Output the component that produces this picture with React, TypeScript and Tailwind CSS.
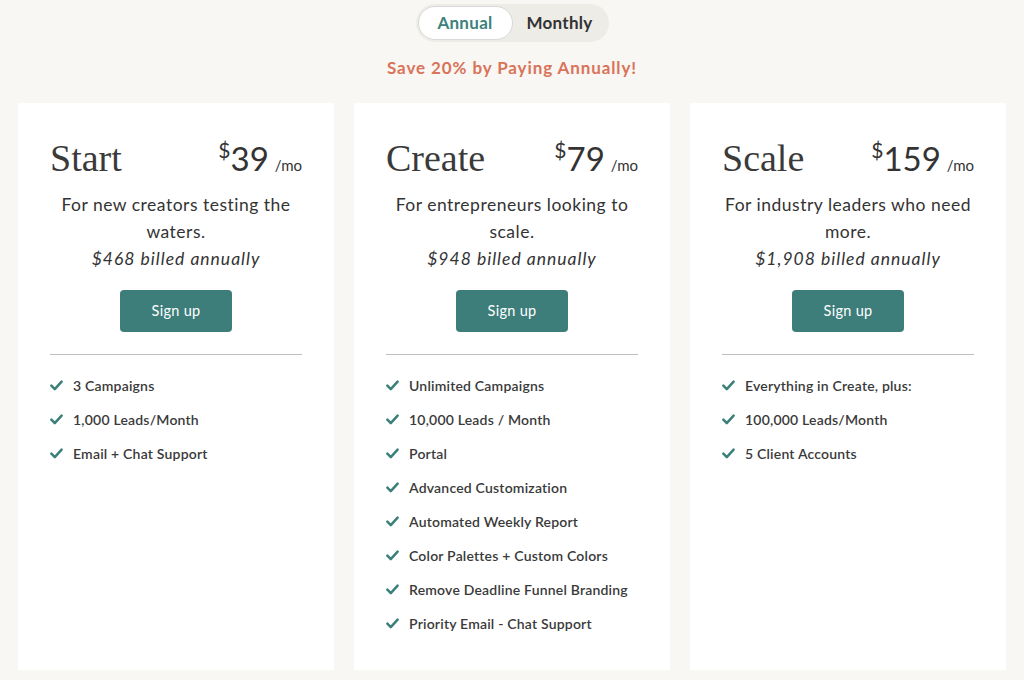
import React from "react";

const sans = { fontFamily: '"Lato", "Noto Sans", sans-serif' };

type Plan = {
  name: string;
  price: string;
  desc: string;
  billed: string;
  features: string[];
};

const plans: Plan[] = [
  {
    name: "Start",
    price: "39",
    desc: "For new creators testing the waters.",
    billed: "$468 billed annually",
    features: ["3 Campaigns", "1,000 Leads/Month", "Email + Chat Support"],
  },
  {
    name: "Create",
    price: "79",
    desc: "For entrepreneurs looking to scale.",
    billed: "$948 billed annually",
    features: [
      "Unlimited Campaigns",
      "10,000 Leads / Month",
      "Portal",
      "Advanced Customization",
      "Automated Weekly Report",
      "Color Palettes + Custom Colors",
      "Remove Deadline Funnel Branding",
      "Priority Email - Chat Support",
    ],
  },
  {
    name: "Scale",
    price: "159",
    desc: "For industry leaders who need more.",
    billed: "$1,908 billed annually",
    features: ["Everything in Create, plus:", "100,000 Leads/Month", "5 Client Accounts"],
  },
];

function Check() {
  return (
    <svg width="13" height="11" viewBox="0 0 13 11" fill="none" className="shrink-0">
      <path d="M1.4 5.7 L4.8 9.1 L11.6 1.6" stroke="#3b7f79" strokeWidth="2.5" strokeLinecap="round" strokeLinejoin="round" />
    </svg>
  );
}

function Card({ p }: { p: Plan }) {
  return (
    <div className="bg-white px-8 pt-[33px] pb-9 flex flex-col">
      <div className="flex items-baseline justify-between">
        <div className="text-[38px] leading-[44px] text-[#3a3a3a]" style={{ fontFamily: '"Liberation Serif", serif' }}>
          {p.name}
        </div>
        <div className="flex items-baseline text-[#333]" style={sans}>
          <span className="text-[21px] relative -top-[13px]">$</span>
          <span className="text-[33px] leading-[40px]">{p.price}</span>
          <span className="text-[15px] ml-[6px]">/mo</span>
        </div>
      </div>
      <div className="mt-[11px] -mx-3 text-center text-[17.5px] leading-[27px] text-[#333] tracking-[0.5px]" style={sans}>
        <div className="px-2">{p.desc}</div>
        <div className="italic tracking-[1px]">{p.billed}</div>
      </div>
      <div className="flex justify-center mt-[18px]">
        <button className="w-[112px] h-[42px] bg-[#3d7e7a] rounded-[4px] text-white text-[14.5px] tracking-[0.3px]" style={sans}>
          Sign up
        </button>
      </div>
      <div className="mt-[22px] h-px bg-[#bdbdbd]" />
      <ul className="mt-[20px] flex flex-col gap-[14px]" style={sans}>
        {p.features.map((f) => (
          <li key={f} className="flex items-center gap-[10px] h-5 text-[14px] font-semibold text-[#3a3a3a] tracking-[0.2px]">
            <Check />
            <span>{f}</span>
          </li>
        ))}
      </ul>
    </div>
  );
}

export default function App() {
  return (
    <div className="w-[1024px] h-[680px] bg-[#f8f7f3] overflow-hidden" style={sans}>
      <div className="flex justify-center pt-1">
        <div className="flex items-center h-[38px] w-[193px] rounded-full bg-[#eeece7] p-[2px]">
          <div className="h-[34px] w-[95px] rounded-full bg-white border border-[#d9d9d9] flex items-center justify-center text-[17px] font-bold text-[#3d817c] tracking-[0.3px]">
            Annual
          </div>
          <div className="flex-1 flex items-center justify-center text-[17px] font-bold text-[#333] tracking-[0.3px]">
            Monthly
          </div>
        </div>
      </div>
      <div className="text-center mt-[16px] text-[17px] font-bold text-[#d9735a] leading-5 tracking-[0.9px]">
        Save 20% by Paying Annually!
      </div>
      <div className="grid grid-cols-3 gap-5 px-[18px] mt-[25px] h-[567px]">
        {plans.map((p) => (
          <Card key={p.name} p={p} />
        ))}
      </div>
    </div>
  );
}
